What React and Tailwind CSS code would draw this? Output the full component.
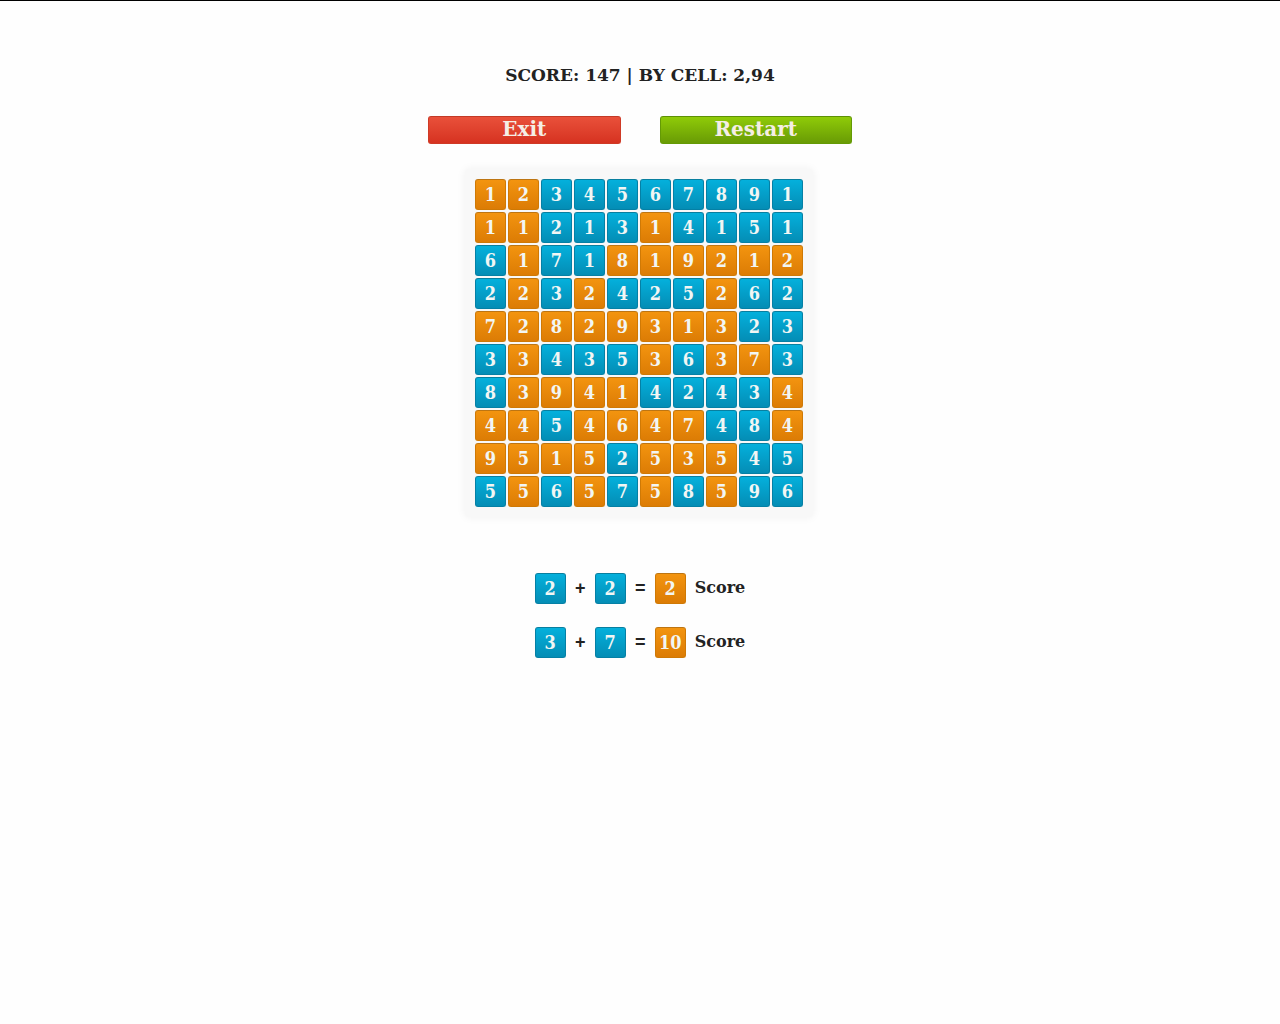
import { useState } from 'react';
import clsx from 'clsx';

// "o" marks a cell that has already been crossed out
const START = [
  '1o 2o 3 4 5 6 7 8 9 1',
  '1o 1o 2 1 3 1o 4 1 5 1',
  '6 1o 7 1 8o 1o 9o 2o 1o 2o',
  '2 2o 3 2o 4 2 5 2o 6 2',
  '7o 2o 8o 2o 9o 3o 1o 3o 2 3',
  '3 3o 4 3 5 3o 6 3o 7o 3',
  '8 3o 9o 4o 1o 4 2 4 3 4o',
  '4o 4o 5 4o 6o 4o 7o 4 8 4o',
  '9o 5o 1o 5o 2 5o 3o 5o 4 5',
  '5 5o 6 5o 7 5o 8 5o 9 6',
];

const parseBoard = () =>
  START.map((row) =>
    row.split(' ').map((cell) => ({ value: cell[0], used: cell.endsWith('o') }))
  );

const RULES = [
  { left: 2, right: 2, score: 2 },
  { left: 3, right: 7, score: 10 },
];

export default function App() {
  const [board, setBoard] = useState(parseBoard);

  const toggleCell = (r, c) => {
    setBoard(
      board.map((row, y) =>
        row.map((cell, x) => (y === r && x === c ? { ...cell, used: !cell.used } : cell))
      )
    );
  };

  return (
    <div className="min-h-screen border-t border-black bg-[#fefefe] font-['DejaVu_Serif',serif] font-bold text-[#222]">
      <main className="flex flex-col items-center px-4 pt-16">
        <h1 className="text-[17px] leading-5">SCORE: 147 | BY CELL: 2,94</h1>

        {/* ── Actions ── */}
        <div className="mt-[31px] grid w-full max-w-[424px] grid-cols-2 gap-[39px]">
          <ActionButton className="border-[#cf3a26] border-t-[#c23a27] from-[#e9503a] to-[#d63220]">
            Exit
          </ActionButton>
          <ActionButton
            className="border-[#649a05] border-t-[#5d9006] from-[#8fcb08] to-[#699b05]"
            onClick={() => setBoard(parseBoard())}
          >
            Restart
          </ActionButton>
        </div>

        {/* ── Board ── */}
        <div className="mt-[25px] mr-[2px] grid grid-cols-10 gap-[2px] rounded-sm bg-[#f8f8f8] p-[10px] shadow-[0_0_10px_#f1f1f1]">
          {board.map((row, r) =>
            row.map((cell, c) => (
              <button
                key={`${r}-${c}`}
                type="button"
                onClick={() => toggleCell(r, c)}
                className={tileClass(cell.used)}
              >
                {cell.value}
              </button>
            ))
          )}
        </div>

        {/* ── Scoring rules ── */}
        <div className="mt-[56px] flex flex-col gap-[23px]">
          {RULES.map((rule) => (
            <p key={rule.score} className="flex items-center">
              <span className={tileClass(false)}>{rule.left}</span>
              <Sign>+</Sign>
              <span className={tileClass(false)}>{rule.right}</span>
              <Sign>=</Sign>
              <span className={tileClass(true)}>{rule.score}</span>
              <span className="ml-[9px] pb-[2px] text-base">Score</span>
            </p>
          ))}
        </div>
      </main>
    </div>
  );
}

function tileClass(used) {
  return clsx(
    "flex size-[31px] items-center justify-center rounded-[3px] border bg-linear-to-b font-['DejaVu_Serif_Condensed','DejaVu_Serif',serif] text-lg leading-none text-[#f2f6f4]",
    used
      ? 'border-[#cf7905] border-t-[#bd7512] from-[#f3940f] to-[#dc7c05]'
      : 'border-[#0580a5] border-t-[#087f9f] from-[#04b0dc] to-[#048db5]'
  );
}

function ActionButton({ className, children, onClick }) {
  return (
    <button
      type="button"
      onClick={onClick}
      className={clsx(
        'flex h-7 items-center justify-center rounded-[3px] border bg-linear-to-b pb-[2px] text-xl leading-6 text-[#f5eee6]',
        className
      )}
    >
      {children}
    </button>
  );
}

function Sign({ children }) {
  return (
    <span className="w-[29px] pb-[2px] text-center font-['Liberation_Sans',sans-serif] text-lg leading-6">
      {children}
    </span>
  );
}
